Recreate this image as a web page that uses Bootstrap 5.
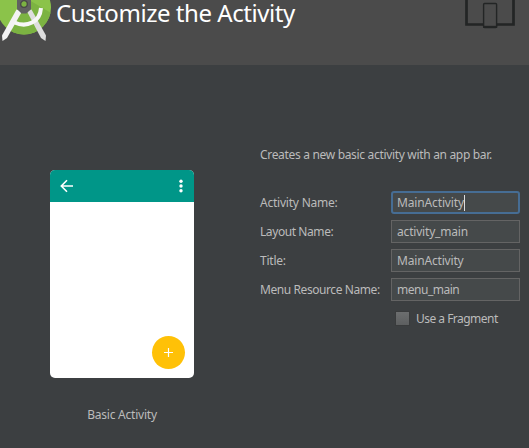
<!DOCTYPE html>
<html lang="en">
<head>
<meta charset="utf-8">
<meta name="viewport" content="width=device-width, initial-scale=1">
<title>Customize the Activity</title>
<link href="https://cdn.jsdelivr.net/npm/bootstrap@5.3.0/dist/css/bootstrap.min.css" rel="stylesheet">
<style>
html, body { height: 448px; overflow: hidden; }
body { background: #3c3f41; color: #bbb; font: 12px/16px "Noto Sans", "Open Sans", sans-serif; letter-spacing: -.22px; }
.wizard-head { height: 65px; background: #4b4b4b; }
.wizard-title { font-size: 24px; line-height: 26px; font-weight: 400; color: #fff; margin: 0 0 0 5px; letter-spacing: -.45px; }
.device-icon { margin-right: 13px; }
.preview-pane { width: 260px; padding: 105px 0 0 50px; }
.phone { width: 144px; height: 208px; border-radius: 5px; background: #fff; overflow: hidden; }
.phone-bar { height: 32px; background: #009688; }
.fab { width: 33px; height: 33px; border-radius: 50%; background: #ffc107; margin: 0 9px 9px 0; }
.preview-name { width: 144px; margin-top: 29px; }
.form-pane { width: 260px; padding-top: 82px; }
.intro { margin-bottom: 28px; letter-spacing: -.32px; }
.field-row { height: 23px; margin-bottom: 6px; }
.field-label { width: 131px; }
.tight { letter-spacing: -.42px; }
.field-box.form-control { width: 129px; height: 23px; padding: 0 5px; border: 1px solid #646464; border-radius: 0; background: #45494a; color: #bbb; font: inherit; line-height: 21px; letter-spacing: -.18px; }
.field-box.form-control.tight { letter-spacing: -.48px; }
.field-box.form-control.is-active { border: 2px solid #466d94; border-radius: 3px; padding: 0 4px; line-height: 19px; letter-spacing: -.14px; }
.caret { width: 1px; height: 16px; background: #ddd; }
.tick-box { width: 15px; height: 15px; margin-left: 135px; background: linear-gradient(#6c6e6f, #5d5f60); border: 1px solid #393b3c; }
.tick-label { margin-left: 6px; letter-spacing: -.52px; }
</style>
</head>
<body>
<header class="wizard-head d-flex align-items-start">
  <svg width="51" height="44" viewBox="0 0 51 44" aria-hidden="true">
    <defs><clipPath id="disc"><circle cx="24" cy="7.5" r="27"/></clipPath></defs>
    <circle cx="24" cy="7.5" r="27" fill="#8bc34a"/>
    <path clip-path="url(#disc)" d="M29 0 51 13V44H20L10 30 19 14Z" fill="#7cb342"/>
    <path d="M27 11.5 31.5 9.5 46 35.5 45.5 41 41 38Z" fill="#dedede"/>
    <path d="M16.5 9.5 2 35.5 2.5 41 7 38 22 11.5Z" fill="#f3f3f3"/>
    <path d="M14.5 22.5C27 28 40 22 41 8" fill="none" stroke="#f7f7f7" stroke-width="4"/>
    <path d="M17 0H31V9L26.5 13.5H21.5L17 9Z" fill="#616161"/>
    <circle cx="24" cy="4" r="3.3" fill="#7cb342" stroke="#484848" stroke-width="1.3"/>
  </svg>
  <h1 class="wizard-title text-nowrap">Customize the Activity</h1>
  <svg class="device-icon ms-auto" width="51" height="29" viewBox="0 0 51 29" aria-hidden="true">
    <path d="M1.5 0V24.5H48.5V0" fill="none" stroke="#232525" stroke-width="2.7"/>
    <rect x="18.6" y="3.5" width="13" height="24" rx="1" fill="#4b4b4b" stroke="#232525" stroke-width="1.4"/>
    <path d="M18 26.8H32.2" stroke="#232525" stroke-width="2"/>
  </svg>
</header>
<main class="d-flex">
  <section class="preview-pane">
    <div class="phone d-flex flex-column justify-content-between">
      <div class="phone-bar">
        <svg width="144" height="32" viewBox="0 0 144 32" class="d-block" aria-hidden="true">
          <path d="M23 16H11.5M17 10.3 11.3 16 17 21.7" fill="none" stroke="#fff" stroke-width="1.6"/>
          <g fill="#fff"><circle cx="131" cy="11.2" r="1.7"/><circle cx="131" cy="16" r="1.7"/><circle cx="131" cy="20.8" r="1.7"/></g>
        </svg>
      </div>
      <div class="fab align-self-end d-flex align-items-center justify-content-center">
        <svg width="9" height="9" viewBox="0 0 9 9" aria-hidden="true"><path d="M4.5 0V9M0 4.5H9" stroke="#fff" stroke-width="1.2"/></svg>
      </div>
    </div>
    <div class="preview-name text-center">Basic Activity</div>
  </section>
  <form class="form-pane">
    <div class="intro text-nowrap">Creates a new basic activity with an app bar.</div>
    <div class="field-row d-flex align-items-center">
      <span class="field-label">Activity Name:</span>
      <div class="field-box form-control is-active d-flex align-items-center"><span>MainActivity</span><span class="caret"></span></div>
    </div>
    <div class="field-row d-flex align-items-center">
      <span class="field-label tight">Layout Name:</span>
      <div class="field-box form-control">activity_main</div>
    </div>
    <div class="field-row d-flex align-items-center">
      <span class="field-label">Title:</span>
      <div class="field-box form-control">MainActivity</div>
    </div>
    <div class="field-row d-flex align-items-center">
      <span class="field-label tight text-nowrap">Menu Resource Name:</span>
      <div class="field-box form-control tight">menu_main</div>
    </div>
    <div class="field-row d-flex align-items-center">
      <span class="tick-box flex-shrink-0"></span><span class="tick-label text-nowrap">Use a Fragment</span>
    </div>
  </form>
</main>
<script src="https://cdn.jsdelivr.net/npm/bootstrap@5.3.0/dist/js/bootstrap.bundle.min.js"></script>
</body>
</html>
